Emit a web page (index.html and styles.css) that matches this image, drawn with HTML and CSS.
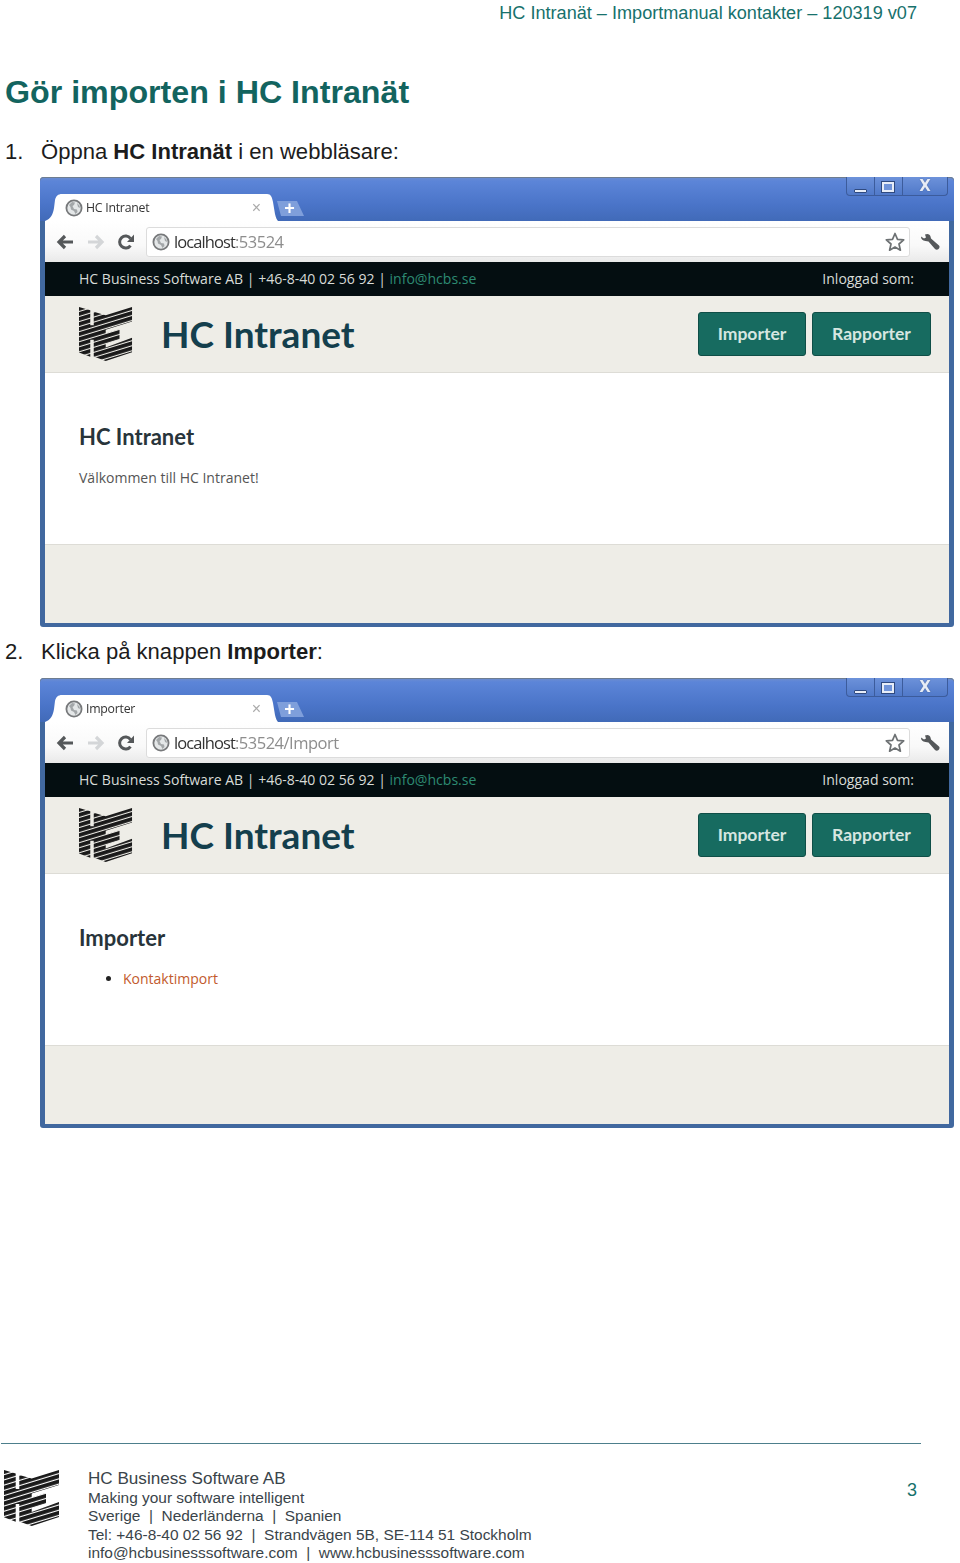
FILE: index.html
```html
<!DOCTYPE html>
<html lang="sv">
<head>
<meta charset="utf-8">
<title>Gör importen i HC Intranät</title>
<link rel="stylesheet" href="styles.css">
</head>
<body>
<svg class="sprite" width="0" height="0" aria-hidden="true">
  <defs>
    <pattern id="stripes" width="60" height="5" patternUnits="userSpaceOnUse" patternTransform="rotate(-17)">
      <rect width="60" height="3.9" fill="currentColor"/>
    </pattern>
    <symbol id="logo" viewBox="0 0 56 56">
      <path fill="url(#stripes)" d="M0 0L11.7 3.4V51.700L0 47.300ZM11.700 19H15.300V34H11.700ZM15.300 5L27.700 8.600 55 0V15L27.700 23.500V27.500L42 23V33.500L27.700 38V42L55 32V47L27.700 56 15.300 51.400Z"/>
    </symbol>
    <symbol id="globe" viewBox="0 0 18 18">
      <circle cx="9" cy="9" r="7.600" fill="#e4e7e8" stroke="#77797b" stroke-width="1.800"/>
      <path fill="#a3a7a9" d="M4 6l3-3 3 .5-1 2.500-1.500 1 1.500 3 3 .5 .5 2.500-2 2-1.500-3-3-1.500-.5-2.500ZM12 4l2.500 2.500 .5 2.500-2-1Z"/>
    </symbol>
    <symbol id="back" viewBox="0 0 18 16">
      <path fill="none" stroke="currentColor" stroke-width="3.200" d="M17 8H3M9 2L3 8l6 6"/>
    </symbol>
    <symbol id="reload" viewBox="0 0 18 18">
      <path fill="none" stroke="currentColor" stroke-width="3" d="M13.500 12.500A6 6 0 1 1 13.500 5.500"/>
      <path fill="currentColor" d="M17 1.500V9H10Z"/>
    </symbol>
    <symbol id="star" viewBox="0 0 20 20">
      <path fill="#fff" stroke="#6d7173" stroke-width="1.700" stroke-linejoin="round" d="M10 1.500l2.500 5.800 6.200 .6-4.700 4.100 1.400 6.200-5.400-3.200-5.400 3.200 1.400-6.200L1.300 7.900l6.200-.6Z"/>
    </symbol>
    <symbol id="wrench" viewBox="0 0 20 18">
      <path fill="#55585a" d="M1 3.500L4 5.500 6 4.500 5 1.500C7.500 .3 10 1 10.500 3.500L11 5.500 19 12.500C20 13.500 19.500 15 18.500 16S16 17 15 16L8.500 8.500 5.500 8C2.500 7.500 .8 6 1 3.500Z"/>
    </symbol>
  </defs>
</svg>

<div class="page">
  <header class="doc-head">HC Intranät – Importmanual kontakter – 120319 v07</header>
  <h1 class="doc-title">Gör importen i HC Intranät</h1>

  <p class="step step-first"><span class="step-num">1.</span><span>Öppna <b>HC Intranät</b> i en webbläsare:</span></p>

  <section class="win">
    <div class="titlebar">
      <div class="tabs">
        <div class="tab">
          <svg class="tab-globe"><use href="#globe"/></svg>
          <span class="tab-label">HC Intranet</span>
          <span class="tab-close">×</span>
        </div>
        <div class="newtab">+</div>
      </div>
      <div class="winctl">
        <span class="ctl"><i class="ctl-min"></i></span>
        <span class="ctl"><i class="ctl-max"></i></span>
        <span class="ctl ctl-wide">X</span>
      </div>
    </div>
    <div class="toolbar">
      <svg class="nav nav-back"><use href="#back"/></svg>
      <svg class="nav nav-fwd"><use href="#back"/></svg>
      <svg class="nav nav-reload"><use href="#reload"/></svg>
      <div class="omni">
        <svg class="omni-globe"><use href="#globe"/></svg>
        <span class="url">localhost<em>:53524</em></span>
        <svg class="omni-star"><use href="#star"/></svg>
      </div>
      <svg class="wrench"><use href="#wrench"/></svg>
    </div>
    <div class="topbar">
      <span>HC Business Software AB | +46-8-40 02 56 92 | <a class="mail">info@hcbs.se</a></span>
      <span>Inloggad som:</span>
    </div>
    <div class="sitehead">
      <svg class="site-logo"><use href="#logo"/></svg>
      <div class="site-name">HC Intranet</div>
      <div class="btn btn-imp">Importer</div>
      <div class="btn btn-rap">Rapporter</div>
    </div>
    <div class="content">
      <h2 class="content-h">HC Intranet</h2>
      <p class="welcome">Välkommen till HC Intranet!</p>
    </div>
    <div class="sitefoot"></div>
  </section>

  <p class="step step-second"><span class="step-num">2.</span><span>Klicka på knappen <b>Importer</b>:</span></p>

  <section class="win">
    <div class="titlebar">
      <div class="tabs">
        <div class="tab">
          <svg class="tab-globe"><use href="#globe"/></svg>
          <span class="tab-label">Importer</span>
          <span class="tab-close">×</span>
        </div>
        <div class="newtab">+</div>
      </div>
      <div class="winctl">
        <span class="ctl"><i class="ctl-min"></i></span>
        <span class="ctl"><i class="ctl-max"></i></span>
        <span class="ctl ctl-wide">X</span>
      </div>
    </div>
    <div class="toolbar">
      <svg class="nav nav-back"><use href="#back"/></svg>
      <svg class="nav nav-fwd"><use href="#back"/></svg>
      <svg class="nav nav-reload"><use href="#reload"/></svg>
      <div class="omni">
        <svg class="omni-globe"><use href="#globe"/></svg>
        <span class="url">localhost<em>:53524/Import</em></span>
        <svg class="omni-star"><use href="#star"/></svg>
      </div>
      <svg class="wrench"><use href="#wrench"/></svg>
    </div>
    <div class="topbar">
      <span>HC Business Software AB | +46-8-40 02 56 92 | <a class="mail">info@hcbs.se</a></span>
      <span>Inloggad som:</span>
    </div>
    <div class="sitehead">
      <svg class="site-logo"><use href="#logo"/></svg>
      <div class="site-name">HC Intranet</div>
      <div class="btn btn-imp">Importer</div>
      <div class="btn btn-rap">Rapporter</div>
    </div>
    <div class="content">
      <h2 class="content-h">Importer</h2>
      <ul class="links"><li><a>Kontaktimport</a></li></ul>
    </div>
    <div class="sitefoot"></div>
  </section>

  <footer class="doc-foot">
    <svg class="foot-logo"><use href="#logo"/></svg>
    <div class="foot-text">
      <div class="foot-name">HC Business Software AB</div>
      <div>Making your software intelligent</div>
      <div>Sverige &nbsp;|&nbsp; Nederländerna &nbsp;|&nbsp; Spanien</div>
      <div>Tel: +46-8-40 02 56 92 &nbsp;|&nbsp; Strandvägen 5B, SE-114 51 Stockholm</div>
      <div>info@hcbusinesssoftware.com &nbsp;|&nbsp; www.hcbusinesssoftware.com</div>
    </div>
    <div class="page-num">3</div>
  </footer>
</div>
</body>
</html>
```

FILE: styles.css
```css
* { box-sizing: border-box; }
html, body { margin: 0; padding: 0; background: #fff; }
body { font-family: "Liberation Sans", Arial, sans-serif; color: #1a1a1a; }
.sprite { display: block; }

.page { width: 960px; height: 1563px; display: flex; flex-direction: column; overflow: hidden; }

.doc-head { height: 26px; padding-right: 43px; text-align: right; font-size: 18.130px; line-height: 26px; color: #17716c; }
.doc-title { margin: 46px 0 0 5px; height: 40px; font-size: 32.200px; line-height: 40px; font-weight: 700; color: #13645f; }

.step { margin: 0; padding-left: 5px; display: flex; font-size: 22.050px; line-height: 26px; color: #1c1c1c; }
.step-num { width: 36px; }
.step-first { margin-top: 27px; height: 26px; margin-bottom: 12px; }
.step-second { margin-top: 12px; height: 26px; margin-bottom: 13px; }

.win {
  flex: none; width: 914px; height: 450px; margin-left: 40px; padding: 0 5px 4px;
  display: flex; flex-direction: column;
  background: #41689f; border-radius: 4px 4px 3px 3px; filter: blur(.35px);
}

.titlebar {
  flex: none; height: 44px; margin: 0 -5px; padding: 0 6px 0 5px;
  display: flex; justify-content: space-between;
  background: linear-gradient(#6f8fce 0, #5c85d8 4px, #4a74c8 28px, #416ab8 44px);
  border-radius: 4px 4px 0 0;
  box-shadow: inset 0 1px 0 #6e7d90;
}
.tabs { align-self: flex-end; display: flex; align-items: flex-end; }
.tab {
  width: 233px; height: 27px; display: flex; align-items: center; padding: 0 17px 0 20px;
  background: #fff;
  clip-path: path("M0 27 C6 25 8 20 9 14 L10 6 C11 2 13 0 17 0 H222 C226 0 227 3 228 8 L230 20 C231 24 232 26 233 27 Z");
}
.tab-globe { width: 18px; height: 18px; flex: none; }
.tab-label { flex: 1; margin-left: 3px; font: 12.300px/18px "Open Sans", sans-serif; color: #333; letter-spacing: -.25px; }
.tab-close { font: 16px/18px "Liberation Sans", sans-serif; color: #aaa; }
.newtab {
  width: 29px; height: 15px; margin: 0 0 5px -3px; background: #7f9fdb; text-align: center;
  font: 700 18px/15px "Liberation Sans", sans-serif; color: #fff;
  clip-path: polygon(2px 0, 22px 0, 29px 100%, 6px 100%);
}
.winctl {
  width: 102px; height: 19px; display: flex; background: linear-gradient(#6d92da, #5079c9);
  border: 1px solid #3c5c9c; border-top: 0; border-radius: 0 0 4px 4px;
}
.ctl { width: 28px; flex: none; display: flex; align-items: center; justify-content: center; border-right: 1px solid #3c5c9c; }
.ctl-wide { flex: 1; border-right: 0; font: 700 15px/19px "DejaVu Sans", sans-serif; color: #e6ecf6; text-shadow: 0 0 1px #26406f; }
.ctl-min { width: 13px; height: 4px; margin-top: 9px; background: #e7edf8; border: 1px solid #2f4a80; border-radius: 1px; }
.ctl-max { width: 12px; height: 10px; margin-top: 1px; margin-right: 1px; border: 2px solid #e7edf8; outline: 1px solid #2f4a80; background: #7094da; }

.toolbar {
  flex: none; height: 41px; display: flex; align-items: center;
  background: linear-gradient(#fff 0, #f9f9f9 60%, #e9e9e9 100%);
  color: #5c5e60;
}
.nav { flex: none; width: 18px; height: 16px; color: #55585a; }
.nav-back { margin-left: 11px; }
.nav-fwd { margin-left: 13px; color: #d4d6d8; transform: scaleX(-1); }
.nav-reload { margin-left: 12px; width: 18px; height: 18px; }
.omni {
  flex: none; width: 764px; height: 30px; margin-left: 11px; padding: 0 4px 0 5px; display: flex; align-items: center;
  background: #fff; border: 1px solid #dcdcdc; border-radius: 3px;
}
.omni-globe { width: 18px; height: 18px; flex: none; }
.url { flex: 1; margin-left: 4px; font: 16.500px/24px "Open Sans", sans-serif; letter-spacing: -.9px; color: #333; }
.url em { font-style: normal; color: #8d8d8d; letter-spacing: -.5px; }
.omni-star { width: 20px; height: 20px; flex: none; }
.wrench { flex: none; width: 20px; height: 18px; margin-left: 10px; }

.topbar {
  flex: none; height: 34px; padding: 0 35px 0 34px; display: flex; justify-content: space-between; align-items: center;
  background: #040e11; font: 500 14.050px/20px "Open Sans", sans-serif; color: #d8dcd8;
}
.mail { color: #2d8a72; }

.sitehead {
  flex: none; height: 77px; display: flex; align-items: center; padding: 0 18px 0 34px;
  background: #eeede7; border-bottom: 1px solid #dddcd6;
}
.site-logo { width: 54px; height: 54px; color: #17404e; flex: none; }
.site-name { flex: 1; margin-left: 28px; font: 700 37px/44px Lato, sans-serif; color: #143f4d; }
.btn {
  height: 44px; border: 1px solid #0f4e47; border-radius: 3px; background: #176b60;
  text-align: center; font: 700 17.500px/42px Lato, sans-serif; color: #d6e6e0;
}
.btn-imp { width: 108px; margin-right: 6px; }
.btn-rap { width: 119px; }

.content { flex: 1; padding: 50px 34px 0; background: #fff; }
.content-h { margin: 0; font: 700 22px/28px Lato, sans-serif; color: #28343a; }
.welcome { margin: 17px 0 0; font: 500 14px/20px "Open Sans", sans-serif; color: #555; }
.links { margin: 17px 0 0; padding: 0 0 0 44px; font: 500 14px/20px "Open Sans", sans-serif; color: #222; }
.links a { color: #c25a2c; }

.sitefoot { flex: none; height: 79px; background: #eeede7; border-top: 1px solid #dddcd6; }

.doc-foot {
  flex: none; margin-top: auto; height: 120px; width: 920px; margin-left: 1px;
  border-top: 1.500px solid #4d7f8c; display: flex; padding: 26px 0 0 3px;
}
.foot-logo { width: 56px; height: 56px; color: #1d3a48; flex: none; }
.foot-text { flex: 1; margin-left: 28px; margin-top: -1.500px; font-size: 15.450px; line-height: 18.500px; color: #3a444a; }
.foot-name { font-size: 17.100px; line-height: 20px; }
.page-num { font-size: 18px; line-height: 20px; padding-top: 10px; padding-right: 4px; color: #17716c; }
```
